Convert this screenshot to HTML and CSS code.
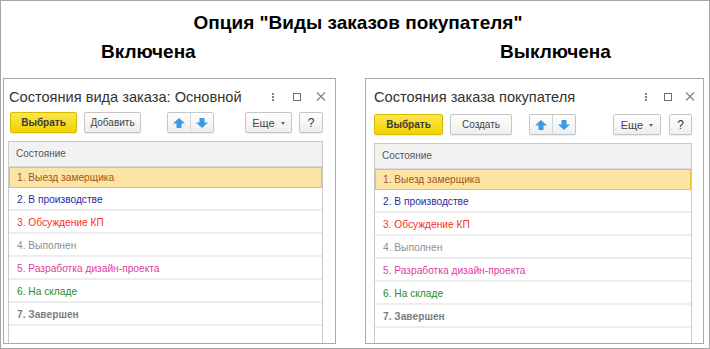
FILE: index.html
```html
<!DOCTYPE html>
<html lang="ru">
<head>
<meta charset="utf-8">
<title>Опция "Виды заказов покупателя"</title>
<link rel="stylesheet" href="styles.css">
</head>
<body>
<div class="frame">
  <h1 class="title">Опция "Виды заказов покупателя"</h1>
  <div class="labels"><span class="label">Включена</span><span class="label">Выключена</span></div>
  <div class="windows">
    <section class="win win-a">
      <div class="win-head">
        <span class="win-title">Состояния вида заказа: Основной</span>
        <div class="win-ctrls">
          <svg class="ico" width="16" height="12" viewBox="0 0 16 12"><rect x="7" y="2" width="2" height="2" fill="#808080"/><rect x="7" y="5" width="2" height="2" fill="#808080"/><rect x="7" y="8" width="2" height="2" fill="#808080"/></svg>
          <svg class="ico" width="16" height="12" viewBox="0 0 16 12"><rect x="4.5" y="2.5" width="7" height="7" fill="none" stroke="#707070" stroke-width="1"/></svg>
          <svg class="ico" width="16" height="12" viewBox="0 0 16 12"><path d="M4 1.5 L12 9.5 M12 1.5 L4 9.5" stroke="#808080" stroke-width="1.1" fill="none"/></svg>
        </div>
      </div>
      <div class="toolbar">
        <button class="btn btn-primary w-a1">Выбрать</button>
        <button class="btn w-a2">Добавить</button>
        <div class="btn-group g-a">
          <span class="cell"><svg width="12" height="10" viewBox="0 0 12 10"><polygon points="6,0 12,5.5 8.5,5.5 8.5,10 3.5,10 3.5,5.5 0,5.5" fill="#3b9be0"/></svg></span>
          <span class="cell cell-r"><svg width="12" height="10" viewBox="0 0 12 10"><polygon points="6,10 12,4.5 8.5,4.5 8.5,0 3.5,0 3.5,4.5 0,4.5" fill="#3b9be0"/></svg></span>
        </div>
        <button class="btn btn-more w-a3">Еще <span class="caret"></span></button>
        <button class="btn btn-help w-a4">?</button>
      </div>
      <div class="list">
        <div class="list-head">Состояние</div>
        <div class="row row-sel c1">1. Выезд замерщика</div>
        <div class="row c2">2. В производстве</div>
        <div class="row c3">3. Обсуждение КП</div>
        <div class="row c4">4. Выполнен</div>
        <div class="row c5">5. Разработка дизайн-проекта</div>
        <div class="row c6">6. На складе</div>
        <div class="row c7">7. Завершен</div>
      </div>
    </section>
    <section class="win win-b">
      <div class="win-head">
        <span class="win-title">Состояния заказа покупателя</span>
        <div class="win-ctrls">
          <svg class="ico" width="16" height="12" viewBox="0 0 16 12"><rect x="7" y="2" width="2" height="2" fill="#808080"/><rect x="7" y="5" width="2" height="2" fill="#808080"/><rect x="7" y="8" width="2" height="2" fill="#808080"/></svg>
          <svg class="ico" width="16" height="12" viewBox="0 0 16 12"><rect x="4.5" y="2.5" width="7" height="7" fill="none" stroke="#707070" stroke-width="1"/></svg>
          <svg class="ico" width="16" height="12" viewBox="0 0 16 12"><path d="M4 1.5 L12 9.5 M12 1.5 L4 9.5" stroke="#808080" stroke-width="1.1" fill="none"/></svg>
        </div>
      </div>
      <div class="toolbar">
        <button class="btn btn-primary w-b1">Выбрать</button>
        <button class="btn w-b2">Создать</button>
        <div class="btn-group g-b">
          <span class="cell"><svg width="12" height="10" viewBox="0 0 12 10"><polygon points="6,0 12,5.5 8.5,5.5 8.5,10 3.5,10 3.5,5.5 0,5.5" fill="#3b9be0"/></svg></span>
          <span class="cell cell-r"><svg width="12" height="10" viewBox="0 0 12 10"><polygon points="6,10 12,4.5 8.5,4.5 8.5,0 3.5,0 3.5,4.5 0,4.5" fill="#3b9be0"/></svg></span>
        </div>
        <button class="btn btn-more w-b3">Еще <span class="caret"></span></button>
        <button class="btn btn-help w-b4">?</button>
      </div>
      <div class="list">
        <div class="list-head">Состояние</div>
        <div class="row row-sel c1">1. Выезд замерщика</div>
        <div class="row c2">2. В производстве</div>
        <div class="row c3">3. Обсуждение КП</div>
        <div class="row c4">4. Выполнен</div>
        <div class="row c5">5. Разработка дизайн-проекта</div>
        <div class="row c6">6. На складе</div>
        <div class="row c7">7. Завершен</div>
      </div>
    </section>
  </div>
</div>
</body>
</html>
```
FILE: styles.css
```css
body {
  margin: 0;
  background: #fff;
}
.frame {
  width: 710px;
  height: 349px;
  box-sizing: border-box;
  border: 1px solid #a6a6a6;
  overflow: hidden;
  background: #fff;
  font-family: "Liberation Sans", Arial, sans-serif;
}
.title {
  margin: 11px 0 0;
  padding-left: 6px;
  font-size: 19px;
  line-height: 22px;
  font-weight: bold;
  text-align: center;
  color: #000;
}
.labels {
  display: grid;
  grid-template-columns: 399px 1fr;
  padding-left: 100px;
  margin-top: 7px;
  font-size: 19px;
  line-height: 22px;
  font-weight: bold;
  color: #000;
}
.windows {
  display: flex;
  gap: 29px;
  margin-top: 15px;
  padding-left: 2px;
}
.win {
  box-sizing: border-box;
  height: 266px;
  border: 1px solid #a9a9a9;
  display: flex;
  flex-direction: column;
  overflow: hidden;
  background: #fff;
}
.win-a {
  width: 333px;
  padding: 8px 12px 0 4px;
}
.win-b {
  width: 339px;
  padding: 8px 11px 0 8px;
}
.win-head {
  display: flex;
  align-items: center;
  height: 20px;
}
.win-a .win-head {
  padding-left: 1px;
}
.win-a .toolbar {
  padding-left: 2px;
}
.win-title {
  font-size: 14.6px;
  color: #333;
  white-space: nowrap;
}
.win-ctrls {
  margin-left: auto;
  margin-right: -6px;
  display: flex;
  gap: 8px;
}
.win-b .win-ctrls {
  gap: 6px;
}
.ico {
  display: block;
}
.toolbar {
  display: flex;
  height: 21px;
  margin-top: 5px;
}
.win-b .toolbar {
  margin-top: 7px;
}
.btn {
  box-sizing: border-box;
  height: 21px;
  margin: 0;
  padding: 0;
  border: 1px solid #c6c6c6;
  border-radius: 2px;
  background: linear-gradient(#ffffff, #eeeeee);
  box-shadow: 0 1px 1px rgba(0, 0, 0, 0.08);
  font-family: "Liberation Sans", Arial, sans-serif;
  font-size: 10px;
  color: #444;
  text-align: center;
  white-space: nowrap;
}
.btn-primary {
  background: linear-gradient(#fbe64e, #f3d300);
  border-color: #d8bb00;
  font-weight: bold;
  color: #3a3a3a;
}
.btn + .btn {
  margin-left: 7px;
}
.btn-group {
  box-sizing: border-box;
  display: flex;
  height: 21px;
  width: 47px;
  border: 1px solid #c6c6c6;
  border-radius: 2px;
  background: linear-gradient(#ffffff, #eeeeee);
  box-shadow: 0 1px 1px rgba(0, 0, 0, 0.08);
}
.cell {
  flex: 1;
  display: flex;
  align-items: center;
  justify-content: center;
}
.cell-r {
  border-left: 1px solid #d4d4d4;
}
.g-a {
  margin-left: 26px;
}
.g-b {
  margin-left: 17px;
}
.btn-more {
  margin-left: auto;
  font-size: 11px;
}
.caret {
  display: inline-block;
  width: 0;
  height: 0;
  margin-left: 3px;
  vertical-align: 2px;
  border-left: 2.5px solid transparent;
  border-right: 2.5px solid transparent;
  border-top: 3px solid #666;
}
.btn-help {
  font-size: 12px;
  color: #333;
}
.btn-more + .btn-help {
  margin-left: 7px;
}
.w-a1 { width: 67px; }
.w-a2 { width: 57px; }
.w-a3 { width: 47px; }
.w-a4 { width: 24px; }
.w-b1 { width: 69px; }
.w-b2 { width: 62px; }
.w-b3 { width: 48px; }
.w-b4 { width: 23px; }
.win-b .btn-more + .btn-help {
  margin-left: 8px;
}
.list {
  flex: 1;
  margin-top: 8px;
  border: 1px solid #c9c9c9;
  border-bottom: none;
  background: #fff;
}
.list-head {
  box-sizing: border-box;
  height: 25px;
  line-height: 24px;
  padding-left: 7px;
  background: #f2f2f2;
  border-bottom: 1px solid #dedede;
  font-size: 10px;
  color: #555;
}
.row {
  box-sizing: border-box;
  height: 23px;
  line-height: 23px;
  padding-left: 8px;
  border-bottom: 2px solid #ededed;
  font-size: 10.2px;
  white-space: nowrap;
}
.row-sel {
  height: 21px;
  line-height: 19px;
  background: #fce5a4;
  border: 1px solid #f0c03a;
  padding-left: 7px;
}
.c1 { color: #a3561c; }
.c2 { color: #2c2c9c; }
.c3 { color: #ff2d2d; }
.c4 { color: #8e8e8e; }
.c5 { color: #e0409c; }
.c6 { color: #2b8a22; }
.c7 { color: #7d7d7d; font-weight: bold; }
```
